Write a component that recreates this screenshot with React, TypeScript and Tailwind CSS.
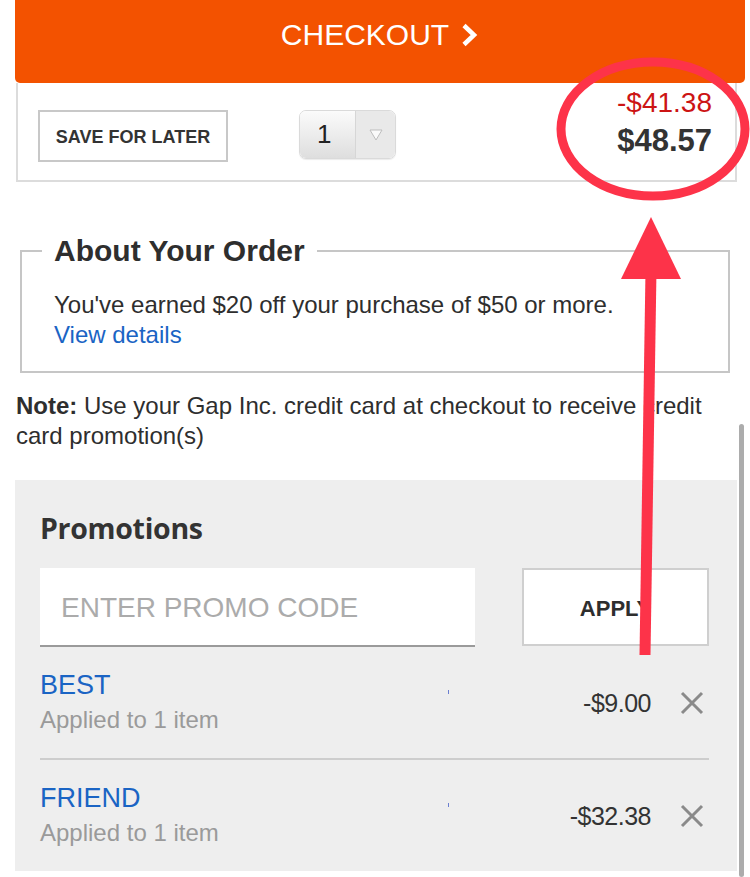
import React from "react";

const sans = { fontFamily: '"Liberation Sans", Arial, sans-serif' };

function PromoRow({ code, amount }: { code: string; amount: string }) {
  return (
    <div className="relative flex items-center py-[21px]">
      <div className="flex flex-col">
        <div className="text-[27px] leading-[35px] text-[#1a64c4]">{code}</div>
        <div className="text-[24px] leading-[34px] text-[#9a9a9a]">Applied to 1 item</div>
      </div>
      <span className="absolute left-[408px] top-[43px] h-[4px] w-[1px] bg-[#6b7fd0]" />
      <div className="ml-auto flex items-center">
        <span className="text-[25px] leading-[30px] text-[#333] tracking-[-0.5px]">{amount}</span>
        <svg width="24" height="24" viewBox="0 0 24 24" className="ml-[29px] mr-[5px]">
          <path d="M2 2 L22 22 M22 2 L2 22" stroke="#8a8a8a" strokeWidth="3" strokeLinecap="butt" />
        </svg>
      </div>
    </div>
  );
}

export default function App() {
  return (
    <div className="relative w-[750px] h-[877px] overflow-hidden bg-white" style={sans}>
      {/* Checkout button */}
      <div className="ml-[15px] mr-[5px] h-[83px] bg-[#f35200] rounded-b-[5px] flex items-center justify-center pb-[13px] text-white">
        <span className="text-[30px] leading-[34px]">CHECKOUT</span>
        <svg width="20" height="24" viewBox="0 0 20 24" className="ml-[10px]">
          <path d="M5 2.5 L15 12 L5 21.5" fill="none" stroke="white" strokeWidth="4.5" strokeLinejoin="miter" />
        </svg>
      </div>

      {/* Item card */}
      <div className="ml-[16px] w-[721px] h-[99px] border-x-2 border-b-2 border-[#dcdcdc] flex items-start pl-[20px] pr-[23px]">
        <div className="mt-[27px] w-[190px] h-[52px] border-2 border-[#c8c8c8] flex items-center justify-center pt-[3px]">
          <span className="text-[18px] font-bold text-[#333]">SAVE FOR LATER</span>
        </div>
        <div className="mt-[27px] ml-[71px] w-[97px] h-[49px] rounded-[7px] border border-[#dadada] flex overflow-hidden shadow-[0_1px_1px_rgba(0,0,0,0.08)]">
          <div className="w-[55px] bg-gradient-to-b from-[#fbfbfb] to-[#dedede] flex items-center pl-[17px] text-[26px] text-[#222]">1</div>
          <div className="flex-1 bg-[#e9e9e9] border-l border-[#d6d6d6] flex items-center justify-center">
            <svg width="14" height="12" viewBox="0 0 14 12">
              <path d="M1 1 L13 1 L7 11 Z" fill="#fafafa" stroke="#bdbdbd" strokeWidth="1" />
            </svg>
          </div>
        </div>
        <div className="ml-auto mt-[4px] flex flex-col items-end">
          <span className="text-[28px] leading-[32px] text-[#cc1414]">-$41.38</span>
          <span className="text-[31px] leading-[44px] font-bold text-[#333]">$48.57</span>
        </div>
      </div>

      {/* About your order */}
      <fieldset className="ml-[20px] mt-[54px] w-[710px] border-2 border-[#c6c6c6] pl-[32px] pb-[21px]">
        <legend className="-ml-[12px] px-[12px] text-[30px] leading-[30px] font-bold text-[#2e2e2e]">About Your Order</legend>
        <div className="mt-[24px] text-[24px] leading-[30px] text-[#2e2e2e]">
          You've earned $20 off your purchase of $50 or more.
        </div>
        <div className="text-[24px] leading-[30px] text-[#1a64c4]">View details</div>
      </fieldset>

      {/* Note */}
      <div className="ml-[16px] mt-[18px] text-[24px] leading-[30px] text-[#2e2e2e]">
        <span className="font-bold">Note:</span> Use your Gap Inc. credit card at checkout to receive credit
        <br />
        card promotion(s)
      </div>

      {/* Promotions panel */}
      <div className="ml-[15px] mt-[29px] w-[722px] bg-[#eeeeee] pl-[25px] pr-[28px] pt-[31px]">
        <div className="text-[28.5px] leading-[34px] font-bold text-[#333] tracking-[-0.3px]" style={{ fontFamily: '"Open Sans", sans-serif' }}>
          Promotions
        </div>
        <div className="mt-[23px] flex items-start">
          <div className="w-[435px] h-[79px] bg-white border-b-2 border-[#9a9a9a] flex items-center pl-[21px] pt-[2px]">
            <span className="text-[28px] text-[#ababab]">ENTER PROMO CODE</span>
          </div>
          <div className="ml-auto w-[187px] h-[78px] bg-white border-2 border-[#cfcfcf] flex items-center justify-center pt-[2px]">
            <span className="text-[22px] font-bold text-[#2e2e2e]">APPLY</span>
          </div>
        </div>
        <PromoRow code="BEST" amount="-$9.00" />
        <div className="h-[2px] bg-[#cdcdcd]" />
        <PromoRow code="FRIEND" amount="-$32.38" />
      </div>

      {/* Scrollbar */}
      <div className="absolute right-[6px] top-[424px] bottom-0 w-[5px] rounded-full bg-[#acacac]" />

      {/* Annotation overlay */}
      <svg className="absolute left-0 top-0 pointer-events-none" width="750" height="877" viewBox="0 0 750 877">
        <ellipse cx="653" cy="129" rx="92" ry="67" fill="none" stroke="#fd3349" strokeWidth="9" />
        <path d="M645 655 L651 270" stroke="#fd3349" strokeWidth="11" />
        <path d="M651 217 L681 279 L621 279 Z" fill="#fd3349" />
      </svg>
    </div>
  );
}
